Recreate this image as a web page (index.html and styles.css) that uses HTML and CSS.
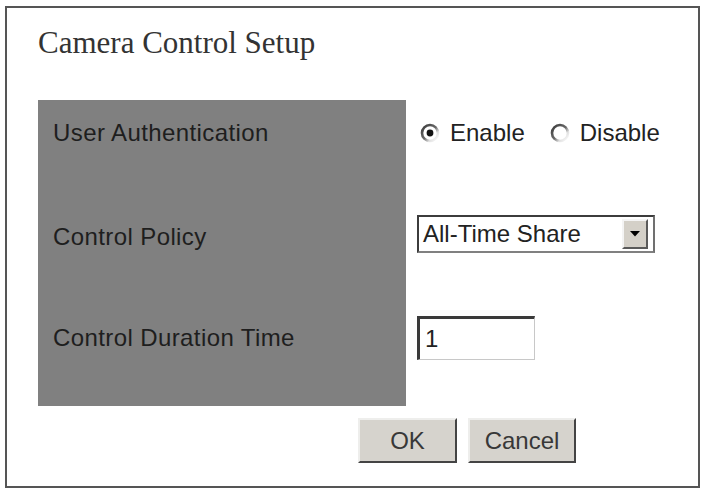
FILE: index.html
```html
<!DOCTYPE html>
<html lang="en">
<head>
    <meta charset="UTF-8">
    <title>Camera Control Setup</title>
    <link rel="stylesheet" href="styles.css">
</head>
<body>
    <div class="frame">
        <h1 class="title">Camera Control Setup</h1>

        <div class="setup">
            <div class="label">User Authentication</div>
            <div class="field">
                <label class="radio">
                    <svg class="radio-mark" width="20" height="20" viewBox="0 0 20 20">
                        <circle cx="10" cy="10" r="8" fill="#fff" stroke="url(#ring)" stroke-width="2.6"/>
                        <circle cx="10" cy="10" r="3.4" fill="#111"/>
                    </svg>
                    Enable
                </label>
                <label class="radio">
                    <svg class="radio-mark" width="20" height="20" viewBox="0 0 20 20">
                        <defs>
                            <linearGradient id="ring" x1="0" y1="0" x2="1" y2="1">
                                <stop offset="0" stop-color="#3a3a3a"/>
                                <stop offset="0.5" stop-color="#6a6a6a"/>
                                <stop offset="0.72" stop-color="#e0e0e0"/>
                                <stop offset="1" stop-color="#fff"/>
                            </linearGradient>
                        </defs>
                        <circle cx="10" cy="10" r="8" fill="#fff" stroke="url(#ring)" stroke-width="2.6"/>
                    </svg>
                    Disable
                </label>
            </div>

            <div class="label">Control Policy</div>
            <div class="field">
                <div class="dropdown">
                    <span class="dropdown-text">All-Time Share</span>
                    <span class="dropdown-btn">
                        <svg width="10" height="6" viewBox="0 0 10 6"><polygon points="0,0 10,0 5,5.5" fill="#000"/></svg>
                    </span>
                </div>
            </div>

            <div class="label">Control Duration Time</div>
            <div class="field">
                <input type="text" class="duration" value="1">
            </div>

            <div class="label"></div>
            <div class="field"></div>
        </div>

        <div class="actions">
            <button class="btn btn-ok">OK</button>
            <button class="btn btn-cancel">Cancel</button>
        </div>
    </div>
</body>
</html>
```

FILE: styles.css
```css
body {
    margin: 0;
    background-color: #fff;
    font-family: "Liberation Sans", Arial, sans-serif;
    color: #222;
}
.frame {
    box-sizing: border-box;
    width: 695px;
    height: 482px;
    margin: 6px 0 0 5px;
    border: 2px solid #555;
    padding: 17px 0 0 31px;
}
.title {
    margin: 0;
    font-family: "Liberation Serif", "Times New Roman", serif;
    font-weight: normal;
    font-size: 31px;
    line-height: 36px;
    color: #333;
}
.setup {
    display: grid;
    grid-template-columns: 368px 1fr;
    grid-template-rows: 66px 142px 60px 38px;
    margin-top: 39px;
    font-size: 24px;
    line-height: 28px;
}
.label {
    background-color: #808080;
    padding-left: 15px;
    display: flex;
    align-items: center;
    color: #1e1e1e;
    letter-spacing: 0.4px;
}
.field {
    padding-left: 11px;
    display: flex;
    align-items: center;
}
.radio {
    display: flex;
    align-items: center;
    gap: 10px;
    margin-right: 22px;
}
.radio-mark {
    display: block;
    margin-left: 3px;
}
.dropdown {
    box-sizing: border-box;
    width: 238px;
    height: 38px;
    margin-bottom: 6px;
    border: 2px solid;
    border-color: #3c3c3c #707070 #808080 #3c3c3c;
    background: #fff;
    display: flex;
    align-items: center;
    justify-content: space-between;
    padding: 0 5px 0 4px;
}
.dropdown-btn {
    box-sizing: border-box;
    width: 26px;
    height: 30px;
    background: #d4d0c8;
    border: 2px solid;
    border-color: #f4f4f4 #5a5a5a #5a5a5a #f4f4f4;
    display: flex;
    align-items: center;
    justify-content: center;
}
.dropdown-btn svg {
    display: block;
}
.duration {
    box-sizing: border-box;
    width: 118px;
    height: 44px;
    margin: 0;
    padding: 0 0 0 5px;
    border: solid #3a3a3a;
    border-width: 3px 1px 1px 3px;
    border-right-color: #c8c8c8;
    border-bottom-color: #c8c8c8;
    font-family: "Liberation Sans", Arial, sans-serif;
    font-size: 24px;
    color: #222;
    outline: none;
}
.actions {
    display: flex;
    gap: 11px;
    margin-top: 12px;
    padding-left: 320px;
}
.btn {
    box-sizing: border-box;
    height: 45px;
    background-color: #d6d3cd;
    border: 2px solid;
    border-color: #eeeeec #444 #444 #eeeeec;
    font-family: "Liberation Sans", Arial, sans-serif;
    font-size: 24px;
    color: #383838;
    padding: 0;
}
.btn-ok {
    width: 99px;
}
.btn-cancel {
    width: 108px;
}
```
